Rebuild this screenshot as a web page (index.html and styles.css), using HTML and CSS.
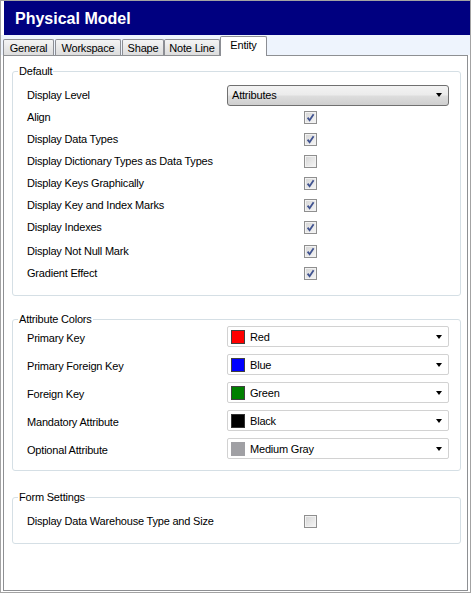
FILE: index.html
```html
<!DOCTYPE html>
<html>
<head>
<meta charset="utf-8">
<link rel="stylesheet" href="styles.css">
</head>
<body>
<div class="window">
  <div class="titlebar">Physical Model</div>
  <div class="tabstrip">
    <div class="tab t-general">General</div>
    <div class="tab t-workspace">Workspace</div>
    <div class="tab t-shape">Shape</div>
    <div class="tab t-note">Note Line</div>
    <div class="tab t-entity selected">Entity</div>
  </div>
  <div class="panel">
    <fieldset class="group group-default">
      <legend>Default</legend>
      <div class="row">
        <span class="label">Display Level</span>
        <div class="select">
          <span>Attributes</span>
          <span class="arrow"></span>
        </div>
      </div>
      <div class="row"><span class="label">Align</span><span class="check on"></span></div>
      <div class="row"><span class="label">Display Data Types</span><span class="check on"></span></div>
      <div class="row"><span class="label">Display Dictionary Types as Data Types</span><span class="check"></span></div>
      <div class="row"><span class="label">Display Keys Graphically</span><span class="check on"></span></div>
      <div class="row"><span class="label">Display Key and Index Marks</span><span class="check on"></span></div>
      <div class="row"><span class="label">Display Indexes</span><span class="check on"></span></div>
      <div class="row row-gap"><span class="label">Display Not Null Mark</span><span class="check on"></span></div>
      <div class="row"><span class="label">Gradient Effect</span><span class="check on"></span></div>
    </fieldset>

    <fieldset class="group group-colors">
      <legend>Attribute Colors</legend>
      <div class="crow">
        <span class="label">Primary Key</span>
        <div class="combo"><span class="swatch red"></span><span class="cname">Red</span><span class="arrow"></span></div>
      </div>
      <div class="crow">
        <span class="label">Primary Foreign Key</span>
        <div class="combo"><span class="swatch blue"></span><span class="cname">Blue</span><span class="arrow"></span></div>
      </div>
      <div class="crow">
        <span class="label">Foreign Key</span>
        <div class="combo"><span class="swatch green"></span><span class="cname">Green</span><span class="arrow"></span></div>
      </div>
      <div class="crow">
        <span class="label">Mandatory Attribute</span>
        <div class="combo"><span class="swatch black"></span><span class="cname">Black</span><span class="arrow"></span></div>
      </div>
      <div class="crow">
        <span class="label">Optional Attribute</span>
        <div class="combo"><span class="swatch gray"></span><span class="cname">Medium Gray</span><span class="arrow"></span></div>
      </div>
    </fieldset>

    <fieldset class="group group-form">
      <legend>Form Settings</legend>
      <div class="row"><span class="label">Display Data Warehouse Type and Size</span><span class="check"></span></div>
    </fieldset>
  </div>
</div>
</body>
</html>
```
FILE: styles.css
```css
html, body {
  margin: 0;
  padding: 0;
  background: #ffffff;
}
body {
  font-family: "Liberation Sans", Arial, sans-serif;
  font-size: 11px;
  letter-spacing: -0.2px;
  color: #000;
}
.window {
  width: 471px;
  height: 593px;
  box-sizing: border-box;
  border: 1px solid #a3a3a3;
  background: #ffffff;
}
.titlebar {
  height: 34px;
  margin-left: 3px;
  padding: 1px 0 0 11px;
  box-sizing: border-box;
  background: #000080;
  color: #fff;
  font-weight: bold;
  font-size: 16px;
  letter-spacing: 0;
  line-height: 33px;
}
.tabstrip {
  height: 20px;
  background: #eef4fd;
  display: flex;
  align-items: flex-end;
  padding-left: 2px;
}
.tab {
  height: 16px;
  box-sizing: border-box;
  border: 1px solid #8c8e94;
  border-bottom: none;
  border-radius: 2px 2px 0 0;
  background: linear-gradient(#f4f4f4, #dddddd);
  line-height: 16px;
  text-align: center;
  white-space: nowrap;
}
.t-general { width: 51px; }
.t-workspace { width: 66px; margin-left: 1px; }
.t-shape { width: 42px; margin-left: 1px; }
.t-note { width: 56px; }
.t-entity { width: 47px; }
.tab.selected {
  height: 20px;
  margin-bottom: -1px;
  background: #ffffff;
  line-height: 16px;
  position: relative;
  z-index: 1;
}
.panel {
  height: 536px;
  box-sizing: border-box;
  margin: 0 2px;
  border: 1px solid #8e9093;
  background: #fff;
  padding-top: 8px;
}
.group {
  margin: 0 6px 0 8px;
  padding: 6px 0 11px 14px;
  border: 1px solid #d5dfe5;
  border-radius: 3px;
  min-width: 0;
}
.group legend {
  margin-left: -9px;
  padding: 0 1px;
  line-height: 14px;
}
.group-colors {
  margin-top: 16px;
  padding-top: 0;
  padding-bottom: 11px;
  display: flex;
  flex-direction: column;
  gap: 7px;
}
.group-form {
  margin-top: 19px;
  padding-top: 6px;
  padding-bottom: 11px;
}
.row {
  height: 22px;
  display: grid;
  grid-template-columns: 200px 222px;
  align-items: center;
}
.row-gap { margin-top: 2px; }
.check {
  width: 13px;
  height: 13px;
  box-sizing: border-box;
  margin-left: 77px;
  border: 1px solid #8f8f8f;
  background: linear-gradient(135deg, #d4d4d4, #f7f7f7);
  box-shadow: inset 0 0 0 1px #f2f2f2;
}
.check.on {
  background-image: url("data:image/svg+xml;utf8,<svg xmlns='http://www.w3.org/2000/svg' width='11' height='11' viewBox='0 0 11 11'><path d='M2.6 5.6 L4.6 8.2 L8.6 2.2' fill='none' stroke='%23405390' stroke-width='1.8'/></svg>"), linear-gradient(135deg, #d4d4d4, #f7f7f7);
  background-repeat: no-repeat;
}
.select {
  height: 21px;
  box-sizing: border-box;
  border: 1px solid #707070;
  border-radius: 3px;
  background: linear-gradient(#f3f3f3, #ebebeb 48%, #dddddd 52%, #cfcfcf);
  display: flex;
  align-items: center;
  justify-content: space-between;
  padding: 0 6px 0 4px;
}
.arrow {
  width: 0;
  height: 0;
  border-left: 3.5px solid transparent;
  border-right: 3.5px solid transparent;
  border-top: 4px solid #000;
}
.crow {
  height: 21px;
  display: grid;
  grid-template-columns: 200px 222px;
  align-items: center;
}
.crow .label { padding-top: 3px; }
.combo {
  height: 21px;
  box-sizing: border-box;
  border: 1px solid #d2d2d2;
  border-radius: 2px;
  background: #fff;
  display: flex;
  align-items: center;
  padding: 0 6px 0 3px;
}
.swatch {
  width: 14px;
  height: 14px;
  box-sizing: border-box;
  border: 1px solid #333;
}
.swatch.red { background: #ff0000; border-color: #404040; }
.swatch.blue { background: #0000ff; border-color: #404040; }
.swatch.green { background: #008000; border-color: #404040; }
.swatch.black { background: #000000; }
.swatch.gray { background: #a0a0a4; border-color: #a0a0a4; }
.cname {
  flex: 1;
  margin-left: 5px;
}
```
